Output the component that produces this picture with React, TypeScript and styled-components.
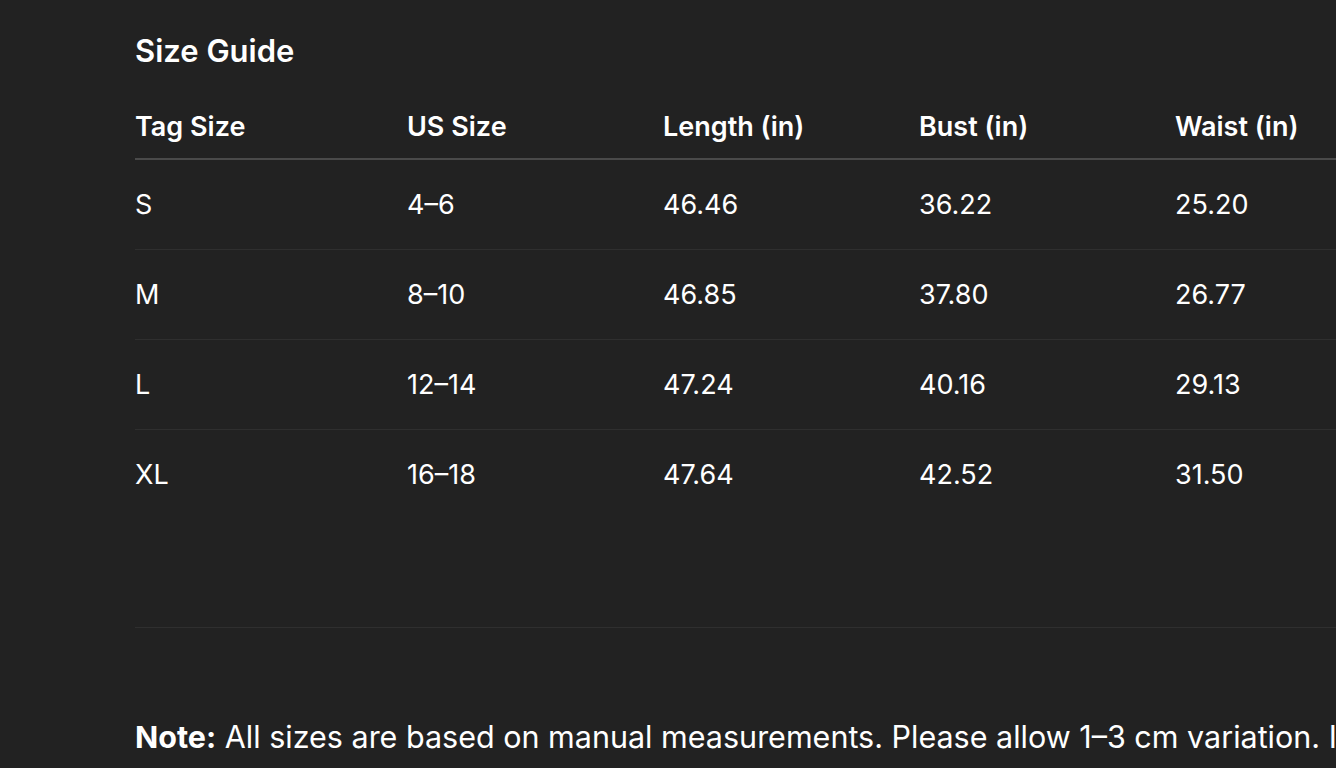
import React from "react";
import styled, { createGlobalStyle } from "styled-components";

const Global = createGlobalStyle`
  html, body {
    margin: 0;
    padding: 0;
    background: #222222;
    overflow: hidden;
  }
  body {
    font-family: Inter, "Noto Sans", "Liberation Sans", sans-serif;
    color: #ffffff;
    -webkit-font-smoothing: antialiased;
  }
`;

const Page = styled.div`
  width: 1336px;
  height: 768px;
  overflow: hidden;
  padding: 31px 0 0 135px;
  box-sizing: border-box;
  background: #222222;
`;

const Title = styled.h2`
  margin: 0 0 23px;
  font-size: 31px;
  line-height: 40px;
  font-weight: 600;
`;

const Table = styled.div`
  display: flex;
  flex-direction: column;
  width: 1201px;
`;

const Row = styled.div<{ $head?: boolean; $last?: boolean }>`
  display: grid;
  grid-template-columns: 272px 256px 256px 256px auto;
  height: ${(p) => (p.$head ? "64px" : "89px")};
  border-bottom: ${(p) =>
    p.$head ? "2px solid #4a4a4a" : p.$last ? "1px solid transparent" : "1px solid #2f2f2f"};
  font-weight: ${(p) => (p.$head ? 600 : 400)};
`;

const Cell = styled.div`
  display: flex;
  align-items: center;
  font-size: 27px;
  white-space: nowrap;
`;

const Rule = styled.div`
  width: 1201px;
  height: 107px;
  border-bottom: 1px solid #2f2f2f;
`;

const Note = styled.p`
  margin: 89px 0 0;
  font-size: 30.5px;
  line-height: 40px;
  white-space: nowrap;
  font-weight: 400;
  strong {
    font-weight: 700;
  }
`;

const headers = ["Tag Size", "US Size", "Length (in)", "Bust (in)", "Waist (in)"];
const rows = [
  ["S", "4–6", "46.46", "36.22", "25.20"],
  ["M", "8–10", "46.85", "37.80", "26.77"],
  ["L", "12–14", "47.24", "40.16", "29.13"],
  ["XL", "16–18", "47.64", "42.52", "31.50"],
];

export default function App() {
  return (
    <>
      <Global />
      <Page>
        <Title>Size Guide</Title>
        <Table>
          <Row $head>
            {headers.map((h) => (
              <Cell key={h}>{h}</Cell>
            ))}
          </Row>
          {rows.map((r, i) => (
            <Row key={r[0]} $last={i === rows.length - 1}>
              {r.map((c, j) => (
                <Cell key={j}>{c}</Cell>
              ))}
            </Row>
          ))}
        </Table>
        <Rule />
        <Note>
          <strong>Note:</strong> All sizes are based on manual measurements. Please allow 1–3 cm variation. I
        </Note>
      </Page>
    </>
  );
}
